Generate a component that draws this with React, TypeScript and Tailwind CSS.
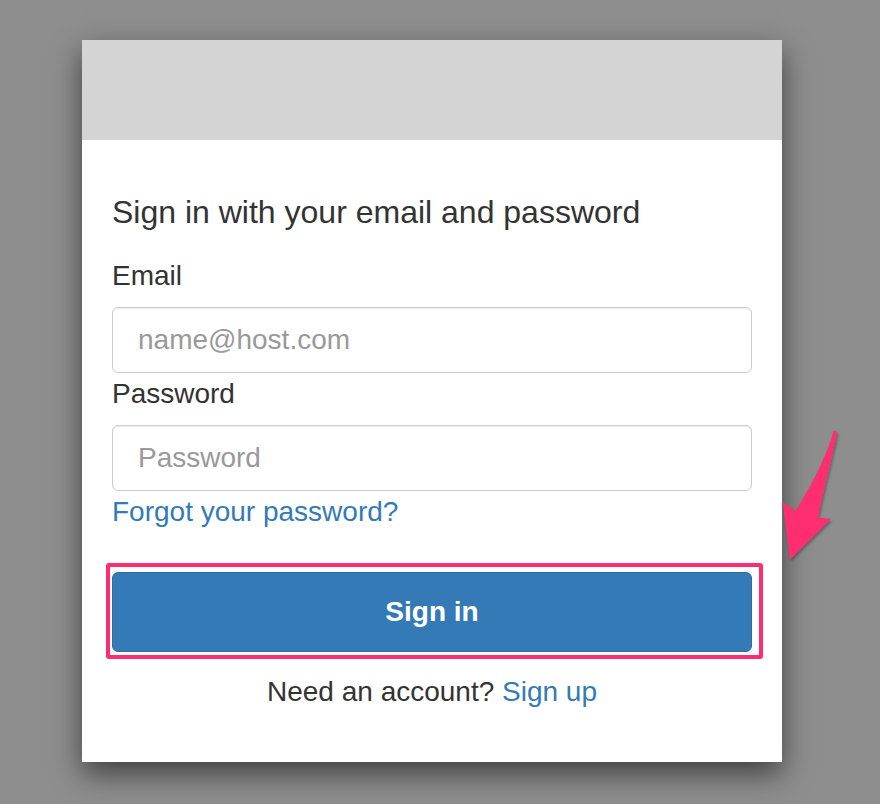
import React from "react";

export default function App() {
  const font = { fontFamily: '"Liberation Sans", Arial, Helvetica, sans-serif' };
  return (
    <div className="w-[880px] h-[804px] bg-[#8e8e8e] overflow-hidden relative" style={font}>
      <div className="pt-[40px] pl-[82px]">
        <div className="relative w-[700px] bg-white shadow-[0_12px_28px_rgba(0,0,0,0.55)]">
          <div className="h-[100px] bg-[#d4d4d4]" />
          <div className="px-[30px] pt-[52px] pb-[52px] flex flex-col">
            <h1 className="text-[32px] leading-[40px] text-[#333333] font-normal">
              Sign in with your email and password
            </h1>
            <label className="mt-[26px] text-[28px] leading-[36px] text-[#333333]">Email</label>
            <input
              className="mt-[13px] h-[66px] w-full rounded-[6px] border border-[#cccccc] px-[25px] text-[28px] text-[#555] placeholder:text-[#999999] shadow-[inset_0_1px_1px_rgba(0,0,0,0.075)] outline-none"
              placeholder="name@host.com"
            />
            <label className="mt-[3px] text-[28px] leading-[36px] text-[#333333]">Password</label>
            <input
              className="mt-[13px] h-[66px] w-full rounded-[6px] border border-[#cccccc] px-[25px] text-[28px] text-[#555] placeholder:text-[#999999] shadow-[inset_0_1px_1px_rgba(0,0,0,0.075)] outline-none"
              placeholder="Password"
              type="password"
            />
            <a className="mt-[3px] text-[28px] leading-[36px] text-[#337ab7] self-start">Forgot your password?</a>
            <button className="mt-[42px] h-[80px] w-full rounded-[6px] border border-[#2e6da4] bg-[#337ab7] text-white text-[28px] font-bold">
              Sign in
            </button>
            <p className="mt-[22px] text-[28px] leading-[36px] text-[#333333] text-center">
              Need an account? <a className="text-[#337ab7]">Sign up</a>
            </p>
          </div>
          <div className="absolute left-[24px] top-[523px] w-[657px] h-[96px] border-[4px] border-[#ff2d6f] rounded-[3px]" />
        </div>
      </div>
      <svg
        className="absolute left-[770px] top-[420px]"
        width="80"
        height="150"
        viewBox="0 0 80 150"
      >
        <defs>
          <filter id="sh" x="-20%" y="-20%" width="140%" height="140%">
            <feDropShadow dx="1" dy="2" stdDeviation="1.5" floodColor="#000" floodOpacity="0.35" />
          </filter>
        </defs>
        <path
          d="M63.5 11 C58 32, 46 58, 25.5 91 L12.5 82 L20 139.5 L61 99 L48 97.5 C53 72, 61 42, 67 14 Q67 9, 63.5 11 Z"
          fill="#ff2d6f"
          filter="url(#sh)"
        />
      </svg>
    </div>
  );
}
